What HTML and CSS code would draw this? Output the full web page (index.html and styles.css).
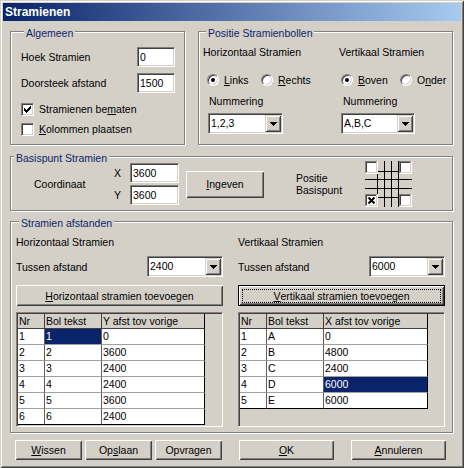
FILE: index.html
```html
<!DOCTYPE html>
<html lang="nl">
<head>
<meta charset="utf-8">
<title>Stramienen</title>
<link rel="stylesheet" href="styles.css">
</head>
<body>
<div class="window">
  <div class="titlebar">Stramienen</div>
  <div class="client">
    <div class="row-top">
      <fieldset class="group g-algemeen">
        <legend>Algemeen</legend>
        <div class="fields">
          <span>Hoek Stramien</span><span class="edit">0</span>
          <span>Doorsteek afstand</span><span class="edit">1500</span>
        </div>
        <div class="checks">
          <div class="check">
            <span class="cbox"><svg width="7" height="7" viewBox="0 0 7 7"><path d="M0 2h1v1h1v1h1v-1h1v-1h1v-1h1v-1h1v3h-1v1h-1v1h-1v1h-1v1h-1v-1h-1v-1h-1v-1h-1z" fill="#000"/></svg></span>
            <span>Stramienen be<u>m</u>aten</span>
          </div>
          <div class="check">
            <span class="cbox"></span>
            <span><u>K</u>olommen plaatsen</span>
          </div>
        </div>
      </fieldset>
      <fieldset class="group g-positie">
        <legend>Positie Stramienbollen</legend>
        <div class="pos-cols">
          <div class="pos-col col-h">
            <div class="pos-head">Horizontaal Stramien</div>
            <div class="radios">
              <span class="opt opt-first"><span class="radio on"></span><span><u>L</u>inks</span></span>
              <span class="opt"><span class="radio"></span><span><u>R</u>echts</span></span>
            </div>
            <div class="pos-label">Nummering</div>
            <div class="combo w75"><span class="ctext">1,2,3</span><span class="cbtn"><svg width="7" height="4" viewBox="0 0 7 4"><path d="M0 0H7V1H6V2H5V3H4V4H3V3H2V2H1V1H0Z" fill="#000"/></svg></span></div>
          </div>
          <div class="pos-col col-v">
            <div class="pos-head">Vertikaal Stramien</div>
            <div class="radios">
              <span class="opt opt-first"><span class="radio on"></span><span><u>B</u>oven</span></span>
              <span class="opt"><span class="radio"></span><span>O<u>n</u>der</span></span>
            </div>
            <div class="pos-label">Nummering</div>
            <div class="combo w74"><span class="ctext">A,B,C</span><span class="cbtn"><svg width="7" height="4" viewBox="0 0 7 4"><path d="M0 0H7V1H6V2H5V3H4V4H3V3H2V2H1V1H0Z" fill="#000"/></svg></span></div>
          </div>
        </div>
      </fieldset>
    </div>

    <fieldset class="group g-basis">
      <legend>Basispunt Stramien</legend>
      <div class="basis-row">
        <div class="coord">Coordinaat</div>
        <div class="xy">
          <span class="xylabel">X</span><span class="edit">3600</span>
          <span class="xylabel">Y</span><span class="edit">3600</span>
        </div>
        <div class="btn btn-ingeven"><span><u>I</u>ngeven</span></div>
        <div class="pos-text">Positie<br>Basispunt</div>
        <svg class="basis-icon" width="47" height="46" viewBox="0 0 47 46">
          <g stroke="#000" stroke-width="1" shape-rendering="crispEdges">
            <line x1="12.5" y1="0" x2="12.5" y2="46"/>
            <line x1="19.5" y1="0" x2="19.5" y2="46"/>
            <line x1="26.5" y1="0" x2="26.5" y2="46"/>
            <line x1="33.5" y1="0" x2="33.5" y2="46"/>
            <line x1="0" y1="10.5" x2="47" y2="10.5"/>
            <line x1="0" y1="18.5" x2="47" y2="18.5"/>
            <line x1="0" y1="27.5" x2="47" y2="27.5"/>
            <line x1="0" y1="36.5" x2="47" y2="36.5"/>
          </g>
          <g shape-rendering="crispEdges">
            <g>
              <rect x="0" y="0" width="13" height="13" fill="#fff"/>
              <rect x="0" y="0" width="12" height="1" fill="#808080"/><rect x="0" y="0" width="1" height="12" fill="#808080"/>
              <rect x="1" y="1" width="10" height="1" fill="#404040"/><rect x="1" y="1" width="1" height="10" fill="#404040"/>
              <rect x="0" y="12" width="13" height="1" fill="#fff"/><rect x="12" y="0" width="1" height="13" fill="#fff"/>
              <rect x="1" y="11" width="11" height="1" fill="#D4D0C8"/><rect x="11" y="1" width="1" height="11" fill="#D4D0C8"/>
            </g>
            <g transform="translate(34 0)">
              <rect x="0" y="0" width="13" height="13" fill="#fff"/>
              <rect x="0" y="0" width="12" height="1" fill="#808080"/><rect x="0" y="0" width="1" height="12" fill="#808080"/>
              <rect x="1" y="1" width="10" height="1" fill="#404040"/><rect x="1" y="1" width="1" height="10" fill="#404040"/>
              <rect x="0" y="12" width="13" height="1" fill="#fff"/><rect x="12" y="0" width="1" height="13" fill="#fff"/>
              <rect x="1" y="11" width="11" height="1" fill="#D4D0C8"/><rect x="11" y="1" width="1" height="11" fill="#D4D0C8"/>
            </g>
            <g transform="translate(0 33)">
              <rect x="0" y="0" width="13" height="13" fill="#fff"/>
              <rect x="0" y="0" width="12" height="1" fill="#808080"/><rect x="0" y="0" width="1" height="12" fill="#808080"/>
              <rect x="1" y="1" width="10" height="1" fill="#404040"/><rect x="1" y="1" width="1" height="10" fill="#404040"/>
              <rect x="0" y="12" width="13" height="1" fill="#fff"/><rect x="12" y="0" width="1" height="13" fill="#fff"/>
              <rect x="1" y="11" width="11" height="1" fill="#D4D0C8"/><rect x="11" y="1" width="1" height="11" fill="#D4D0C8"/>
              <path d="M3.5 3.5L9.5 9.5M9.5 3.5L3.5 9.5" stroke="#000" stroke-width="2" shape-rendering="auto"/>
            </g>
            <g transform="translate(34 33)">
              <rect x="0" y="0" width="13" height="13" fill="#fff"/>
              <rect x="0" y="0" width="12" height="1" fill="#808080"/><rect x="0" y="0" width="1" height="12" fill="#808080"/>
              <rect x="1" y="1" width="10" height="1" fill="#404040"/><rect x="1" y="1" width="1" height="10" fill="#404040"/>
              <rect x="0" y="12" width="13" height="1" fill="#fff"/><rect x="12" y="0" width="1" height="13" fill="#fff"/>
              <rect x="1" y="11" width="11" height="1" fill="#D4D0C8"/><rect x="11" y="1" width="1" height="11" fill="#D4D0C8"/>
            </g>
          </g>
        </svg>
      </div>
    </fieldset>

    <fieldset class="group g-afstanden">
      <legend>Stramien afstanden</legend>
      <div class="af-cols">
        <div class="af-col">
          <div class="af-head">Horizontaal Stramien</div>
          <div class="af-tussen">
            <span>Tussen afstand</span>
            <div class="combo w76"><span class="ctext">2400</span><span class="cbtn"><svg width="7" height="4" viewBox="0 0 7 4"><path d="M0 0H7V1H6V2H5V3H4V4H3V3H2V2H1V1H0Z" fill="#000"/></svg></span></div>
          </div>
          <div class="btn btn-wide"><span><u>H</u>orizontaal stramien toevoegen</span></div>
          <div class="gridframe">
            <div class="grid g-left">
              <div class="hc">Nr</div><div class="hc">Bol tekst</div><div class="hc">Y afst tov vorige</div>
              <div class="c">1</div><div class="c sel">1</div><div class="c">0</div>
              <div class="c">2</div><div class="c">2</div><div class="c">3600</div>
              <div class="c">3</div><div class="c">3</div><div class="c">2400</div>
              <div class="c">4</div><div class="c">4</div><div class="c">2400</div>
              <div class="c">5</div><div class="c">5</div><div class="c">3600</div>
              <div class="c">6</div><div class="c">6</div><div class="c">2400</div>
            </div>
          </div>
        </div>
        <div class="af-col">
          <div class="af-head">Vertikaal Stramien</div>
          <div class="af-tussen">
            <span>Tussen afstand</span>
            <div class="combo w76"><span class="ctext">6000</span><span class="cbtn"><svg width="7" height="4" viewBox="0 0 7 4"><path d="M0 0H7V1H6V2H5V3H4V4H3V3H2V2H1V1H0Z" fill="#000"/></svg></span></div>
          </div>
          <div class="btn btn-wide btn-default"><span class="focus"><u>V</u>ertikaal stramien toevoegen</span></div>
          <div class="gridframe">
            <div class="grid g-right">
              <div class="hc">Nr</div><div class="hc">Bol tekst</div><div class="hc">X afst tov vorige</div>
              <div class="c">1</div><div class="c">A</div><div class="c">0</div>
              <div class="c">2</div><div class="c">B</div><div class="c">4800</div>
              <div class="c">3</div><div class="c">C</div><div class="c">2400</div>
              <div class="c">4</div><div class="c">D</div><div class="c sel">6000</div>
              <div class="c">5</div><div class="c">E</div><div class="c">6000</div>
            </div>
          </div>
        </div>
      </div>
    </fieldset>

    <div class="buttons">
      <div class="btn b-small"><span><u>W</u>issen</span></div>
      <div class="btn b-small"><span>Op<u>s</u>laan</span></div>
      <div class="btn b-small"><span>Opvragen</span></div>
      <div class="btn b-big b-ok"><span><u>O</u>K</span></div>
      <div class="btn b-big b-cancel"><span><u>A</u>nnuleren</span></div>
    </div>
  </div>
</div>
</body>
</html>
```

FILE: styles.css
```css
* { box-sizing: border-box; }
html, body { margin: 0; padding: 0; }
body {
  font-family: "Liberation Sans", Arial, sans-serif;
  font-size: 10.5px;
  color: #000;
  background: #D4D0C8;
}
u { text-decoration: underline; text-underline-offset: 1px; }

.window {
  width: 464px;
  height: 468px;
  padding: 3px;
  background: #D4D0C8;
  box-shadow: inset 1px 1px #D4D0C8, inset -1px -1px #404040, inset 2px 2px #fff, inset -2px -2px #808080;
}
.titlebar {
  height: 18px;
  line-height: 18px;
  padding-left: 2px;
  color: #fff;
  font-weight: bold;
  font-size: 12px;
  background: linear-gradient(to right, #0A246A, #A6CAF0);
}
.client { padding: 2px 8px 0 7px; }

/* group boxes */
.group {
  margin: 0;
  padding: 0;
  min-width: 0;
  border: 1px solid #808080;
  box-shadow: inset 1px 1px #fff, 1px 1px #fff;
}
.group legend {
  margin-left: 3px;
  padding: 4px 2px 0;
  line-height: 13px;
  color: #0A246A;
  background: #D4D0C8;
}
.row-top { display: flex; gap: 13px; }
.g-algemeen { width: 175px; height: 122px; padding: 7px 9px 0 10px; }
.g-positie { width: 255px; height: 122px; padding: 0 0 0 4px; }
.g-basis { width: 443px; height: 63px; margin-top: 3px; }
.g-afstanden { width: 443px; height: 220px; margin-top: 2px; padding-left: 5px; }

/* edits */
.edit {
  display: block;
  height: 20px;
  line-height: 18px;
  padding-left: 2px;
  background: #fff;
  border: 1px solid;
  border-color: #808080 #fff #fff #808080;
  box-shadow: inset 1px 1px #404040, inset -1px -1px #D4D0C8;
  white-space: nowrap;
}

/* algemeen */
.fields {
  display: grid;
  grid-template-columns: 1fr 38px;
  row-gap: 6px;
  align-items: center;
}
.checks { margin-top: 6px; }
.check { height: 20px; display: flex; align-items: center; }
.cbox {
  width: 13px;
  height: 13px;
  margin-right: 5px;
  background: #fff;
  border: 1px solid;
  border-color: #808080 #fff #fff #808080;
  box-shadow: inset 1px 1px #404040, inset -1px -1px #D4D0C8;
  display: flex;
  align-items: center;
  justify-content: center;
}

/* positie */
.pos-cols { display: grid; grid-template-columns: 136px 1fr; }
.pos-col { display: flex; flex-direction: column; align-items: flex-start; }
.pos-head { margin-top: 6px; line-height: 13px; white-space: nowrap; }
.radios { margin-top: 12px; height: 17px; display: flex; align-items: center; }
.pos-label { margin-top: 7px; line-height: 13px; }
.col-h .radios { margin-left: 4px; }
.col-h .pos-label { margin-left: 6px; }
.col-h .combo { margin-left: 5px; margin-top: 5px; }
.col-v .radios { margin-left: 2px; }
.col-v .pos-label { margin-left: 4px; }
.col-v .combo { margin-left: 2px; margin-top: 5px; }
.opt { display: flex; align-items: center; gap: 5px; white-space: nowrap; }
.col-h .opt-first { width: 54px; }
.col-v .opt-first { width: 59px; }
.radio {
  width: 12px;
  height: 12px;
  flex: none;
  border-radius: 50%;
  background: #fff;
  border: 1px solid;
  border-color: #808080 #fff #fff #808080;
  box-shadow: inset 1px 1px #404040, inset -1px -1px #D4D0C8;
  display: flex;
  align-items: center;
  justify-content: center;
}
.radio.on::after {
  content: "";
  width: 4px;
  height: 4px;
  border-radius: 50%;
  background: #000;
}

/* combo */
.combo {
  display: flex;
  height: 21px;
  padding: 1px;
  background: #fff;
  border: 1px solid;
  border-color: #808080 #fff #fff #808080;
  box-shadow: inset 1px 1px #404040, inset -1px -1px #D4D0C8;
}
.w74 { width: 74px; }
.w75 { width: 75px; }
.w76 { width: 76px; }
.ctext { flex: 1; padding-left: 1px; line-height: 17px; }
.cbtn {
  width: 16px;
  height: 17px;
  background: #D4D0C8;
  box-shadow: inset 1px 1px #D4D0C8, inset -1px -1px #404040, inset 2px 2px #fff, inset -2px -2px #808080;
  display: flex;
  align-items: center;
  justify-content: center;
}
.cbtn svg { display: block; }

/* buttons */
.btn {
  background: #D4D0C8;
  box-shadow: inset 1px 1px #fff, inset -1px -1px #404040, inset 2px 2px #D4D0C8, inset -2px -2px #808080;
  display: flex;
  align-items: center;
  justify-content: center;
  white-space: nowrap;
}
.btn-default {
  border: 1px solid #000;
  padding: 3px 3px 2px;
  align-items: stretch;
}
.btn-default .focus {
  flex: 1;
  border: 1px dotted #000;
  display: flex;
  align-items: center;
  justify-content: center;
  line-height: 11px;
}

/* basispunt */
.basis-row {
  display: flex;
  align-items: center;
  height: 46px;
  margin-top: -4px;
}
.coord { width: 103px; padding-left: 23px; }
.xy {
  width: 65px;
  display: grid;
  grid-template-columns: 16px 49px;
  row-gap: 2px;
  align-items: center;
}
.xylabel { padding-left: 0; }
.btn-ingeven { width: 78px; height: 27px; margin-left: 7px; }
.pos-text { width: 69px; margin-left: 32px; line-height: 12.5px; }
.basis-icon { display: block; flex: none; }

/* afstanden */
.af-cols { display: grid; grid-template-columns: 207px 207px; column-gap: 15px; }
.af-col { display: flex; flex-direction: column; }
.af-head { margin-top: 6px; line-height: 13px; }
.af-tussen {
  margin-top: 7px;
  display: flex;
  justify-content: space-between;
  align-items: center;
}
.btn-wide { height: 21px; margin-top: 8px; }
.gridframe {
  margin-top: 6px;
  height: 115px;
  padding: 1px;
  background: #D4D0C8;
  border: 1px solid;
  border-color: #808080 #fff #fff #808080;
  box-shadow: inset 1px 1px #404040, inset -1px -1px #D4D0C8;
}
.grid { display: grid; }
.g-left { grid-template-columns: 27px 57px 103px; width: 187px; }
.g-right { grid-template-columns: 27px 57px 104px; width: 188px; }
.hc {
  height: 15px;
  line-height: 14px;
  padding-left: 1px;
  background: #D4D0C8;
  border-right: 1px solid #404040;
  border-bottom: 1px solid #404040;
  white-space: nowrap;
}
.c {
  height: 16px;
  line-height: 15px;
  padding-left: 1px;
  background: #fff;
  border-right: 1px solid #606060;
  border-bottom: 1px solid #A0A0A0;
}
.grid .hc:nth-child(3n), .grid .c:nth-child(3n) { border-right-color: #000; }
.grid .c:nth-last-child(-n+3) { border-bottom-color: #000; }
.c.sel { background: #0A246A; color: #fff; }

/* bottom buttons */
.buttons {
  display: flex;
  margin-top: 7px;
  margin-left: 5px;
  height: 20px;
}
.buttons .btn { height: 20px; }
.b-small { width: 67px; margin-right: 3px; }
.b-small:nth-child(3) { margin-right: 17px; }
.b-big { width: 95px; }
.b-ok { margin-right: 17px; }
```
